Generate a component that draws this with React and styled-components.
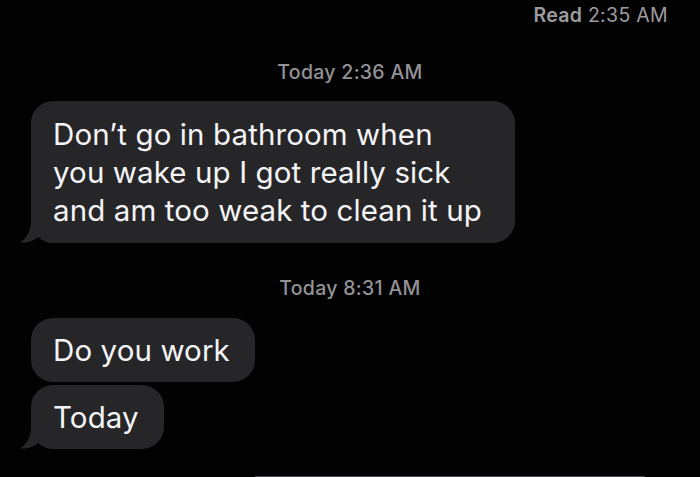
import React from "react";
import styled, { createGlobalStyle } from "styled-components";

const Global = createGlobalStyle`
  html, body { margin: 0; padding: 0; background: #000; }
  body { font-family: Inter, "Liberation Sans", Arial, sans-serif; -webkit-font-smoothing: antialiased; }
`;

const Screen = styled.div`
  width: 700px;
  height: 477px;
  background: #020202;
  display: flex;
  flex-direction: column;
  overflow: hidden;
  box-sizing: border-box;
`;

const ReadReceipt = styled.div`
  align-self: flex-end;
  margin: 4px 32px 0 0;
  font-size: 19.5px;
  line-height: 22px;
  color: #9c9ca0;
  letter-spacing: 0.3px;
  b { font-weight: 600; }
`;

const Stamp = styled.div`
  align-self: center;
  font-size: 19.5px;
  line-height: 22px;
  color: #929296;
  letter-spacing: 0.3px;
  margin-top: ${(p) => p.$top}px;
  margin-bottom: ${(p) => p.$bottom}px;
  font-weight: 500;
`;

const Bubble = styled.div`
  position: relative;
  align-self: flex-start;
  margin-left: 31px;
  margin-top: ${(p) => p.$top || 0}px;
  background: #262628;
  color: #f4f4f6;
  border-radius: 22px;
  padding: ${(p) => (p.$multi ? "14px 30px 14px 22px" : "13px 25px 13px 22px")};
  font-size: 29.5px;
  line-height: 38px;
  letter-spacing: 0.1px;
  width: ${(p) => p.$width || "auto"};
  box-sizing: border-box;
`;

const Tail = styled.svg`
  position: absolute;
  left: -12px;
  bottom: 0;
  width: 30px;
  height: 22px;
`;

const HomeBar = styled.div`
  margin-top: auto;
  margin-left: 255px;
  width: 390px;
  height: 1px;
  background: #4a4a4c;
  border-radius: 1px;
`;

function BubbleTail() {
  return (
    <Tail viewBox="0 0 30 22">
      <path d="M12 0 C12 10 8 17 1 21.5 C9 22 15 19.5 19 16 C22 18 26 20 30 22 L30 0 Z" fill="#262628" />
    </Tail>
  );
}

export default function App() {
  return (
    <Screen>
      <Global />
      <ReadReceipt>
        <b>Read</b> 2:35 AM
      </ReadReceipt>
      <Stamp $top={35} $bottom={18}>
        Today 2:36 AM
      </Stamp>
      <Bubble $multi $width="484px">
        Don’t go in bathroom when you wake up I got really sick and am too weak to clean it up
        <BubbleTail />
      </Bubble>
      <Stamp $top={34} $bottom={19}>
        Today 8:31 AM
      </Stamp>
      <Bubble>Do you work</Bubble>
      <Bubble $top={3}>
        Today
        <BubbleTail />
      </Bubble>
      <HomeBar />
    </Screen>
  );
}
